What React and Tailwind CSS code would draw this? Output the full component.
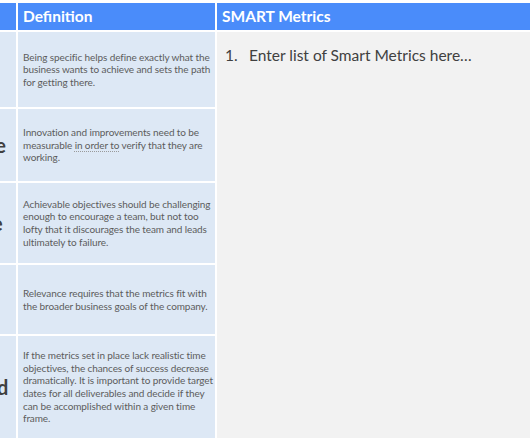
const ROWS = [
  {
    word: 'Specific',
    h: 'h-[75px]',
    text: 'Being specific helps define exactly what the business wants to achieve and sets the path for getting there.',
  },
  {
    word: 'Measurable',
    h: 'h-[72px]',
    text: (
      <>
        Innovation and improvements need to be measurable{' '}
        <span className="underline decoration-dotted decoration-[#9a9a9a] underline-offset-2">in order to</span> verify that
        they are working.
      </>
    ),
  },
  {
    word: 'Achievable',
    h: 'h-[80px]',
    text: 'Achievable objectives should be challenging enough to encourage a team, but not too lofty that it discourages the team and leads ultimately to failure.',
  },
  {
    word: 'Relevant',
    h: 'h-[69px]',
    text: 'Relevance requires that the metrics fit with the broader business goals of the company.',
  },
  {
    word: 'Time-bound',
    h: 'h-[102px]',
    text: 'If the metrics set in place lack realistic time objectives, the chances of success decrease dramatically. It is important to provide target dates for all deliverables and decide if they can be accomplished within a given time frame.',
  },
];

export default function App() {
  return (
    <div className="w-[530px] h-[442px] overflow-hidden bg-white pt-[3px] font-['Lato',sans-serif]">
      <div className="grid grid-cols-[16px_197px_1fr] gap-[2px]">
        {/* cabecera */}
        <div className="h-[27px] bg-[#4a8cfa]" />
        <div className="h-[27px] bg-[#4a8cfa] text-white font-bold text-[15.5px] px-[5px] flex items-center">Definition</div>
        <div className="h-[27px] bg-[#4a8cfa] text-white font-bold text-[15.5px] px-[5px] flex items-center">SMART Metrics</div>

        {ROWS.map((r, i) => (
          <Row key={r.word} row={r} first={i === 0} />
        ))}
      </div>
    </div>
  );
}

function Row({ row, first }) {
  return (
    <>
      <div className={`${row.h} bg-[#dde8f5] overflow-hidden flex justify-end items-center`}>
        <div className="w-[124px] shrink-0 text-center font-bold text-[20px] text-[#404040] leading-none">{row.word}</div>
      </div>
      <div className={`${row.h} bg-[#dde8f5] flex items-center pl-[5px] pr-[1px] text-[10px] tracking-[-0.1px] leading-[12.6px] text-[#5c5c5c]`}>
        <p>{row.text}</p>
      </div>
      {first && (
        <div className="row-span-5 bg-[#f2f2f2] pt-[12px] pl-[8px] text-[15.5px] text-[#404040]">
          <div className="flex">
            <span className="w-[24px]">1.</span>
            <span>Enter list of Smart Metrics here…</span>
          </div>
        </div>
      )}
    </>
  );
}
